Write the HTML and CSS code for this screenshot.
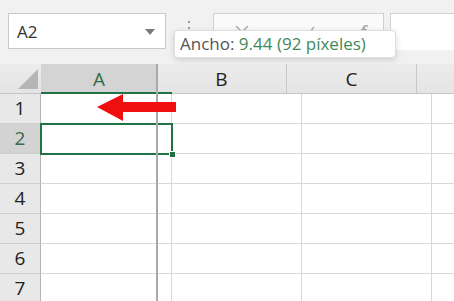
FILE: index.html
```html
<!DOCTYPE html>
<html>
<head>
    <title>Ancho de columna</title>
    <link rel="stylesheet" href="styles.css">
</head>
<body>
    <div class="app">
        <div class="toolbar">
            <div class="namebox">
                <span class="ref">A2</span>
                <svg class="caret" width="10" height="6" viewBox="0 0 10 6"><polygon points="0,0 10,0 5,6" fill="#7a7a7a"/></svg>
            </div>
            <svg class="grip" width="4" height="16" viewBox="0 0 4 16">
                <rect x="1" y="1" width="2" height="2" fill="#9a9a9a"/>
                <rect x="1" y="7" width="2" height="2" fill="#9a9a9a"/>
                <rect x="1" y="13" width="2" height="2" fill="#9a9a9a"/>
            </svg>
            <div class="fx-buttons">
                <svg width="16" height="16" viewBox="0 0 16 16"><path d="M2 2 L14 14 M14 2 L2 14" stroke="#b0b0b0" stroke-width="1.6" fill="none"/></svg>
                <svg width="18" height="16" viewBox="0 0 18 16"><path d="M2 9 L7 14 L16 3" stroke="#b0b0b0" stroke-width="1.6" fill="none"/></svg>
                <span class="fx">f</span>
            </div>
            <div class="formula-input"></div>
        </div>

        <div class="sheet">
            <div class="row head-row">
                <div class="corner"><div class="tri"></div></div>
                <div class="colhead col-a active">A</div>
                <div class="colhead col-b">B</div>
                <div class="colhead col-c">C</div>
                <div class="colhead col-d"></div>
            </div>
            <div class="row">
                <div class="rowhead">1</div>
                <div class="cell a"></div><div class="cell b"></div><div class="cell c"></div><div class="cell d"></div>
            </div>
            <div class="row">
                <div class="rowhead active">2</div>
                <div class="cell a selected"><span class="handle"></span></div><div class="cell b"></div><div class="cell c"></div><div class="cell d"></div>
            </div>
            <div class="row">
                <div class="rowhead">3</div>
                <div class="cell a"></div><div class="cell b"></div><div class="cell c"></div><div class="cell d"></div>
            </div>
            <div class="row">
                <div class="rowhead">4</div>
                <div class="cell a"></div><div class="cell b"></div><div class="cell c"></div><div class="cell d"></div>
            </div>
            <div class="row">
                <div class="rowhead">5</div>
                <div class="cell a"></div><div class="cell b"></div><div class="cell c"></div><div class="cell d"></div>
            </div>
            <div class="row">
                <div class="rowhead">6</div>
                <div class="cell a"></div><div class="cell b"></div><div class="cell c"></div><div class="cell d"></div>
            </div>
            <div class="row">
                <div class="rowhead">7</div>
                <div class="cell a"></div><div class="cell b"></div><div class="cell c"></div><div class="cell d"></div>
            </div>

            <div class="drag-line"></div>
            <svg class="arrow" width="79" height="27" viewBox="0 0 79 27">
                <polygon points="0,13 26,0 26,8 79,8 79,18 26,18 26,27" fill="#f00f0f"/>
            </svg>
        </div>

        <div class="tooltip">Ancho: <span class="value">9.44 (92 píxeles)</span></div>
    </div>
</body>
</html>
```

FILE: styles.css
```css
body {
    margin: 0;
    padding: 0;
    font-family: "Open Sans", "Noto Sans", sans-serif;
    background-color: #fff;
    overflow: hidden;
}
.app {
    position: relative;
    width: 454px;
    height: 301px;
    overflow: hidden;
}
.toolbar {
    height: 64px;
    box-sizing: border-box;
    padding-top: 13px;
    padding-left: 8px;
    background-color: #f1f1f1;
    display: flex;
    align-items: flex-start;
}
.namebox {
    width: 158px;
    height: 36px;
    box-sizing: border-box;
    border: 1px solid #c8c8c8;
    background-color: #fff;
    display: flex;
    align-items: center;
    justify-content: space-between;
    padding: 0 10px 0 8px;
}
.ref {
    font-size: 17px;
    color: #333;
}
.caret {
    margin-top: 1px;
}
.grip {
    margin: 7px 22px 0 21px;
}
.fx-buttons {
    width: 171px;
    height: 36px;
    box-sizing: border-box;
    border: 1px solid #d0d0d0;
    border-bottom: none;
    background-color: #fafafa;
    display: flex;
    align-items: center;
    padding-left: 20px;
    gap: 48px;
}
.fx {
    font-family: "Liberation Serif", serif;
    font-style: italic;
    font-weight: bold;
    font-size: 19px;
    color: #a8a8a8;
    margin-left: -4px;
}
.formula-input {
    flex: 1;
    height: 36px;
    margin-left: 6px;
    border: 1px solid #d0d0d0;
    border-right: none;
    border-bottom: none;
    background-color: #fff;
}
.sheet {
    position: relative;
}
.row {
    display: flex;
    height: 30px;
}
.head-row {
    position: relative;
    background: linear-gradient(#ececec, #e4e4e4);
    border-bottom: 1px solid #c6c6c6;
    height: 29px;
}
/* green bar under the selected column header */
.head-row::after {
    content: "";
    position: absolute;
    left: 41px;
    width: 131px;
    bottom: -1px;
    height: 2px;
    background-color: #217346;
    z-index: 2;
}
.corner {
    width: 41px;
    position: relative;
    box-sizing: border-box;
}
.tri {
    position: absolute;
    right: 3px;
    bottom: 4px;
    width: 0;
    height: 0;
    border-left: 20px solid transparent;
    border-bottom: 20px solid #b5b5b5;
}
.colhead {
    box-sizing: border-box;
    border-right: 1px solid #c8c8c8;
    font-size: 19px;
    color: #222;
    text-align: center;
    line-height: 30px;
}
.colhead.col-a {
    width: 116px;
}
.colhead.col-b,
.colhead.col-c {
    width: 130px;
}
.colhead.col-d {
    flex: 1;
    border-right: none;
}
.colhead.active {
    background: #d4d4d4;
    color: #2f6b47;
    border-right: none;
}
.rowhead {
    width: 41px;
    box-sizing: border-box;
    background-color: #e8e8e8;
    border-right: 1px solid #b4b4b4;
    border-bottom: 1px solid #cfcfcf;
    font-size: 19px;
    color: #222;
    text-align: center;
    line-height: 29px;
}
.rowhead.active {
    background-color: #d3d3d3;
    color: #3b6a4d;
}
.cell {
    box-sizing: border-box;
    border-right: 1px solid #d8d8d8;
    border-bottom: 1px solid #d8d8d8;
    position: relative;
}
.cell.a {
    width: 131px;
}
.cell.b,
.cell.c {
    width: 130px;
}
.cell.d {
    flex: 1;
    border-right: none;
}
.cell.selected {
    outline: 2px solid #217346;
    outline-offset: -1px;
    z-index: 2;
}
.handle {
    position: absolute;
    right: -5px;
    bottom: -5px;
    width: 5px;
    height: 5px;
    background-color: #217346;
    border: 1px solid #fff;
}
.drag-line {
    position: absolute;
    left: 156px;
    top: 0;
    bottom: -20px;
    width: 2px;
    background-color: #a9a9a9;
    z-index: 3;
}
.arrow {
    position: absolute;
    left: 97px;
    top: 30px;
    z-index: 4;
}
.tooltip {
    position: absolute;
    left: 174px;
    top: 30px;
    width: 222px;
    height: 28px;
    box-sizing: border-box;
    background-color: #fff;
    border: 1px solid #dedede;
    border-radius: 4px;
    box-shadow: 0px 2px 6px rgba(0, 0, 0, 0.15);
    font-size: 17px;
    line-height: 26px;
    padding-left: 5px;
    color: #555;
    white-space: nowrap;
    z-index: 5;
}
.value {
    color: #3f8a5a;
}
```
